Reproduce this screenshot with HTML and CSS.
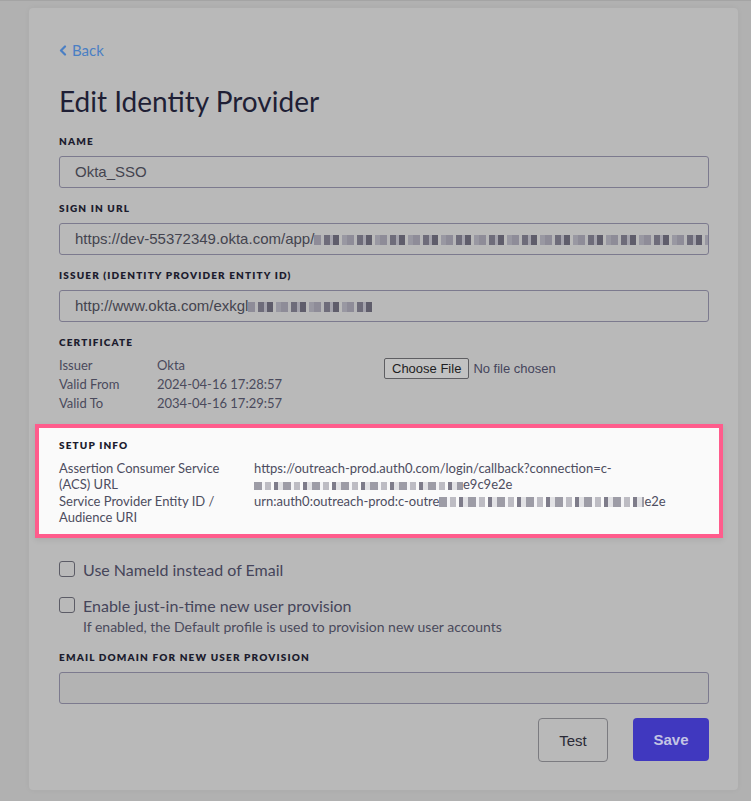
FILE: index.html
```html
<!DOCTYPE html>
<html lang="en">
<head>
    <meta charset="UTF-8">
    <title>Edit Identity Provider</title>
    <link rel="stylesheet" href="styles.css">
</head>
<body>
    <div class="page">
        <div class="card">
            <a class="back" href="#">
                <svg class="back-icon" width="8" height="11" viewBox="0 0 8 11"><path d="M6 1.5 2 5.5 6 9.5" fill="none" stroke="currentColor" stroke-width="2.2" stroke-linecap="round" stroke-linejoin="round"/></svg>
                Back
            </a>

            <h1 class="title">Edit Identity Provider</h1>

            <div class="field">
                <div class="label">Name</div>
                <div class="input">Okta_SSO</div>
            </div>

            <div class="field">
                <div class="label">Sign in URL</div>
                <div class="input">https://dev-55372349.okta.com/app/<span class="redact redact-long"></span></div>
            </div>

            <div class="field">
                <div class="label">Issuer (Identity Provider Entity ID)</div>
                <div class="input">http://www.okta.com/exkgl<span class="redact redact-short"></span></div>
            </div>

            <div class="label">Certificate</div>
            <div class="cert">
                <span class="cert-key">Issuer</span>
                <span class="cert-val">Okta</span>
                <div class="file">
                    <span class="file-btn">Choose File</span>
                    <span class="file-name">No file chosen</span>
                </div>
                <span class="cert-key">Valid From</span>
                <span class="cert-val">2024-04-16 17:28:57</span>
                <span class="cert-key">Valid To</span>
                <span class="cert-val">2034-04-16 17:29:57</span>
            </div>

            <div class="setup">
                <div class="label">Setup Info</div>
                <div class="setup-grid">
                    <span>Assertion Consumer Service (ACS) URL</span>
                    <span>https://outreach-prod.auth0.com/login/callback?connection=c-<br><span class="redact redact-acs"></span>e9c9e2e</span>
                    <span>Service Provider Entity ID / Audience URI</span>
                    <span>urn:auth0:outreach-prod:c-outre<span class="redact redact-urn"></span>e2e</span>
                </div>
            </div>

            <label class="check">
                <span class="box"></span>
                <span>Use NameId instead of Email</span>
            </label>
            <label class="check check-jit">
                <span class="box"></span>
                <span>Enable just-in-time new user provision</span>
            </label>
            <div class="help">If enabled, the Default profile is used to provision new user accounts</div>

            <div class="field field-email">
                <div class="label">Email domain for new user provision</div>
                <div class="input input-empty"></div>
            </div>

            <div class="actions">
                <button class="btn btn-test">Test</button>
                <button class="btn btn-save">Save</button>
            </div>
        </div>
    </div>
</body>
</html>
```

FILE: styles.css
```css
* {
    margin: 0;
    padding: 0;
    box-sizing: border-box;
}

body {
    background-color: #b1b1b1;
    font-family: Lato, 'Noto Sans', sans-serif;
    color: #4a4a5c;
}

.page {
    border-top: 1px solid #a4a4a4;
    padding: 7px 13px 11px 29px;
}

/* card */
.card {
    background-color: #b9b9b9;
    border-radius: 4px;
    padding: 33px 29px 28px 30px;
    box-shadow: 0 0 6px rgba(0, 0, 0, 0.04);
}

.back {
    display: flex;
    align-items: center;
    gap: 5px;
    height: 18px;
    font-size: 15px;
    color: #4a7fc4;
    text-decoration: none;
}

.title {
    margin-top: 26px;
    font-size: 28px;
    font-weight: 400;
    line-height: 32px;
    color: #1f1f35;
}

.label {
    font-size: 10px;
    font-weight: 800;
    line-height: 14px;
    letter-spacing: 1.15px;
    text-transform: uppercase;
    color: #1c1c2e;
}

.title + .field {
    margin-top: 17px;
}

.field {
    margin-bottom: 13px;
}

.input {
    height: 32px;
    margin-top: 8px;
    padding: 0 15px;
    border: 1px solid #7c7a8e;
    border-radius: 3px;
    font-family: 'Liberation Sans', Arial, sans-serif;
    font-size: 15px;
    line-height: 30px;
    color: #44444f;
    white-space: nowrap;
    overflow: hidden;
}

.input-empty {
    background-color: #b3b3b3;
}

/* blurred values */
.redact {
    display: inline-block;
    height: 10px;
    vertical-align: -1px;
    background: repeating-linear-gradient(90deg, #8e8c98 0 7px, #b6b6b8 7px 10px, #6e6c7a 10px 16px, #a4a3ac 16px 19px, #5f5d6b 19px 25px, #bababa 25px 28px, #9998a2 28px 33px);
}

.redact-long {
    width: 400px;
}

.redact-short {
    width: 125px;
}

.setup .redact {
    background: repeating-linear-gradient(90deg, #9d9ca6 0 8px, #f4f4f6 8px 11px, #bdbcc3 11px 17px, #fafafa 17px 20px, #7e7c8a 20px 24px, #e2e2e5 24px 29px);
}

.redact-acs {
    width: 209px;
    height: 8px;
}

.redact-urn {
    width: 205px;
}

/* certificate */
.cert {
    display: grid;
    grid-template-columns: 98px 227px auto;
    margin-top: 7px;
    font-size: 13px;
    line-height: 19px;
}

.file {
    grid-column: 3;
    grid-row: 1 / span 2;
    display: flex;
    align-items: center;
    align-self: start;
    gap: 4px;
    margin-top: 2px;
    font-family: 'Liberation Sans', Arial, sans-serif;
    font-size: 13px;
}

.file-btn {
    padding: 1px 7px;
    border: 1px solid #5e5e62;
    border-radius: 2px;
    background-color: #c2c2c2;
    color: #1e1e22;
    line-height: 17px;
}

.file-name {
    color: #45455c;
}

/* highlighted setup block */
.setup {
    margin: 11px -14px 0 -24px;
    padding: 10px 20px 9px 20px;
    border: 4px solid #ff5c8c;
    background-color: #fafafa;
    box-shadow: 0 2px 6px rgba(0, 0, 0, 0.08);
}

.setup-grid {
    display: grid;
    grid-template-columns: 195px auto;
    row-gap: 1px;
    margin-top: 8px;
    font-size: 13px;
    line-height: 16px;
    color: #4d4d60;
}

.setup-grid > span:nth-child(odd) {
    padding-right: 20px;
}

/* checkboxes */
.check {
    display: flex;
    align-items: center;
    gap: 8px;
    height: 22px;
    margin-top: 20px;
    font-size: 16px;
    color: #45455a;
}

.check-jit {
    margin-top: 14px;
}

.box {
    width: 16px;
    height: 16px;
    border: 1px solid #5c5c66;
    border-radius: 3px;
}

.help {
    margin: 3px 0 0 24px;
    font-size: 14px;
    line-height: 16px;
    color: #4a4a5c;
}

.field-email {
    margin-top: 15px;
    margin-bottom: 14px;
}

/* buttons */
.actions {
    display: flex;
    justify-content: flex-end;
    gap: 25px;
}

.btn {
    height: 44px;
    border-radius: 4px;
    font-family: 'Liberation Sans', Arial, sans-serif;
    font-size: 15px;
}

.btn-test {
    width: 70px;
    border: 1px solid #7b7b80;
    background-color: #b9b9b9;
    color: #2a2a36;
}

.btn-save {
    width: 76px;
    height: 43px;
    border: none;
    background-color: #4038bf;
    color: #c3c4e4;
    font-weight: 700;
}
```
